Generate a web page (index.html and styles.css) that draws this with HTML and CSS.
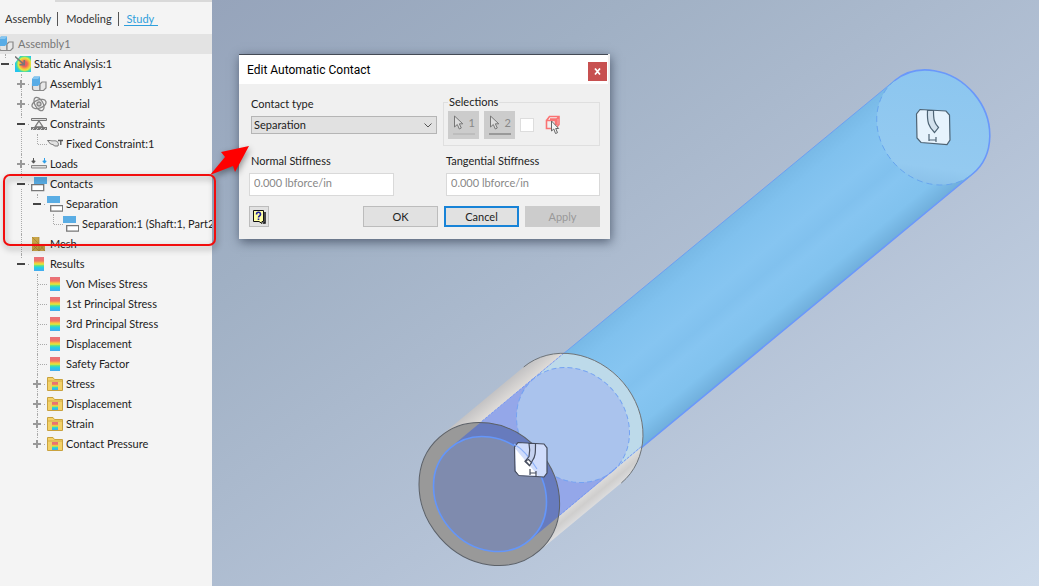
FILE: index.html
```html
<!DOCTYPE html>
<html lang="en">
<head>
  <meta charset="UTF-8" />
  <meta name="viewport" content="width=device-width, initial-scale=1.0" />
  <title>Assembly1 - Static Analysis</title>
  <link rel="stylesheet" href="styles.css">
</head>
<body>
  <!-- shared icons -->
  <svg class="defs" width="0" height="0" aria-hidden="true">
    <defs>
      <linearGradient id="rainbow" x1="0" y1="0" x2="0" y2="1">
        <stop offset="0" stop-color="#e8707c" />
        <stop offset=".28" stop-color="#ee7568" />
        <stop offset=".42" stop-color="#f5c242" />
        <stop offset=".52" stop-color="#dfe83c" />
        <stop offset=".62" stop-color="#5ce08c" />
        <stop offset=".75" stop-color="#22cfe8" />
        <stop offset="1" stop-color="#46a8f0" />
      </linearGradient>
      <radialGradient id="heat" cx=".6" cy=".5" r=".65">
        <stop offset=".25" stop-color="#f0605c" />
        <stop offset=".45" stop-color="#f6b040" />
        <stop offset=".6" stop-color="#e6e83c" />
        <stop offset=".75" stop-color="#4ddc9c" />
        <stop offset=".9" stop-color="#22c4ee" />
      </radialGradient>
      <symbol id="i-assembly" viewBox="0 0 16 16">
        <path d="M4 8h5v6.500H3.500a2 2 0 0 1-2-2V8z" fill="#e4e4e4" stroke="#888" stroke-width="1.200" />
        <path d="M9 8l2-2h4v6l-2.500 2.500H9z" fill="#e8e8e8" stroke="#888" stroke-width="1.200" />
        <path d="M1 3l2-2.500h6V8L7 10H1z" fill="#58ace6" />
        <path d="M1 3l2-2.500h6L7 3z" fill="#86c6f0" />
      </symbol>
      <symbol id="i-static" viewBox="0 0 16 16">
        <path d="M5 0h11v16H0V7z" fill="url(#heat)" />
        <path d="M0 .5l9 8M9.300 4v4.800H4.500" fill="none" stroke="#777" stroke-width="1.600" />
      </symbol>
      <symbol id="i-material" viewBox="0 0 16 16">
        <g fill="none" stroke="#888" stroke-width="1.300">
          <ellipse cx="8" cy="8" rx="7.300" ry="4.200" transform="rotate(-20 8 8)" />
          <ellipse cx="8" cy="8" rx="7.300" ry="4" transform="rotate(60 8 8)" />
          <circle cx="8" cy="8" r="2" fill="#ccc" />
        </g>
      </symbol>
      <symbol id="i-constraints" viewBox="0 0 16 16">
        <path d="M.5 2.500h15v2H.5z" fill="#ddd" stroke="#777" />
        <path d="M8 5l4 6H4z" fill="#eee" stroke="#777" stroke-width="1.300" />
        <path d="M0 11h16v3H0z" fill="#777" />
        <path d="M1 14l2-2M5 14l2-2M9 14l2-2M13 14l2-2" stroke="#ccc" />
      </symbol>
      <symbol id="i-fixed" viewBox="0 0 16 16">
        <path d="M.5 4.500h3c3 1 5-1 7.500 2 .5 1 .5 2 0 3.500H7.500C7 8.500 5 8.500 3.500 8z" fill="#e2e2e2" stroke="#777" />
        <path d="M11 4.500h5M13.800 4.500V9" fill="none" stroke="#555" stroke-width="1.300" />
      </symbol>
      <symbol id="i-loads" viewBox="0 0 16 16">
        <path d="M2.500 2v5M.8 5l1.700 2.200L4.200 5z" stroke="#555" fill="#555" />
        <path d="M13.500 2v5M11.800 5l1.700 2.200L15.200 5z" stroke="#2f9fe8" fill="#2f9fe8" />
        <path d="M.5 9.500h15v2.500H.5z" fill="#ddd" stroke="#888" />
      </symbol>
      <symbol id="i-contact" viewBox="0 0 16 16">
        <path d="M3 1h13v7H3z" fill="#5aade4" />
        <path d="M.7 8.700h12v6H.7z" fill="#fff" stroke="#777" stroke-width="1.300" />
      </symbol>
      <symbol id="i-separation" viewBox="0 0 16 16">
        <path d="M0 0h13v7H0z" fill="#5aade4" />
        <path d="M3.700 9.700h12v5.500h-12z" fill="#fff" stroke="#777" stroke-width="1.300" />
      </symbol>
      <symbol id="i-mesh" viewBox="0 0 16 16">
        <path d="M1 1h7v7h6v7H1z" fill="#c9a548" />
        <path d="M1 1l7 7H1l7 7V8l6 7M1 15l7-7V1M8 15l6-7" fill="none" stroke="#a48130" stroke-width=".7" />
      </symbol>
      <symbol id="i-result" viewBox="0 0 16 16">
        <path d="M3 1h10v14H3z" fill="url(#rainbow)" />
      </symbol>
      <symbol id="i-folder" viewBox="0 0 16 16">
        <path d="M.5 14.500v-13H6l1.500 2h8v11z" fill="#f3d168" stroke="#c9a23e" />
        <path d="M1 5h14" stroke="#d4ad48" />
        <path d="M5 6h6v8H5z" fill="url(#rainbow)" />
      </symbol>
      <symbol id="i-cursor" viewBox="0 0 12 16">
        <path d="M1.500 1v11l2.800-2.500 2 4.500 2-1-2-4.200h3.500z" fill="#ddd" stroke="#777" />
      </symbol>
    </defs>
  </svg>

  <aside class="sidebar">
    <nav class="tabs">
      <a href="#" class="tab">Assembly</a>
      <a href="#" class="tab">Modeling</a>
      <a href="#" class="tab active">Study</a>
    </nav>
    <div class="doc"><svg class="icon"><use href="#i-assembly" /></svg>Assembly1</div>

    <ul class="tree">
      <li>
        <div class="row"><button class="toggle minus" aria-label="Collapse"></button><svg class="icon"><use href="#i-static" /></svg>Static Analysis:1</div>
        <ul>
          <li><div class="row"><button class="toggle plus" aria-label="Expand"></button><svg class="icon"><use href="#i-assembly" /></svg>Assembly1</div></li>
          <li><div class="row"><button class="toggle plus" aria-label="Expand"></button><svg class="icon"><use href="#i-material" /></svg>Material</div></li>
          <li>
            <div class="row"><button class="toggle minus" aria-label="Collapse"></button><svg class="icon"><use href="#i-constraints" /></svg>Constraints</div>
            <ul>
              <li><div class="row leaf"><svg class="icon"><use href="#i-fixed" /></svg>Fixed Constraint:1</div></li>
            </ul>
          </li>
          <li><div class="row"><button class="toggle plus" aria-label="Expand"></button><svg class="icon"><use href="#i-loads" /></svg>Loads</div></li>
          <li>
            <div class="row"><button class="toggle minus" aria-label="Collapse"></button><svg class="icon"><use href="#i-contact" /></svg>Contacts</div>
            <ul>
              <li>
                <div class="row"><button class="toggle minus" aria-label="Collapse"></button><svg class="icon"><use href="#i-separation" /></svg>Separation</div>
                <ul>
                  <li><div class="row leaf"><svg class="icon"><use href="#i-separation" /></svg>Separation:1 (Shaft:1, Part2</div></li>
                </ul>
              </li>
            </ul>
          </li>
          <li><div class="row leaf"><svg class="icon"><use href="#i-mesh" /></svg>Mesh</div></li>
          <li>
            <div class="row"><button class="toggle minus" aria-label="Collapse"></button><svg class="icon"><use href="#i-result" /></svg>Results</div>
            <ul>
              <li><div class="row leaf"><svg class="icon"><use href="#i-result" /></svg>Von Mises Stress</div></li>
              <li><div class="row leaf"><svg class="icon"><use href="#i-result" /></svg>1st Principal Stress</div></li>
              <li><div class="row leaf"><svg class="icon"><use href="#i-result" /></svg>3rd Principal Stress</div></li>
              <li><div class="row leaf"><svg class="icon"><use href="#i-result" /></svg>Displacement</div></li>
              <li><div class="row leaf"><svg class="icon"><use href="#i-result" /></svg>Safety Factor</div></li>
              <li><div class="row"><button class="toggle plus" aria-label="Expand"></button><svg class="icon"><use href="#i-folder" /></svg>Stress</div></li>
              <li><div class="row"><button class="toggle plus" aria-label="Expand"></button><svg class="icon"><use href="#i-folder" /></svg>Displacement</div></li>
              <li><div class="row"><button class="toggle plus" aria-label="Expand"></button><svg class="icon"><use href="#i-folder" /></svg>Strain</div></li>
              <li><div class="row"><button class="toggle plus" aria-label="Expand"></button><svg class="icon"><use href="#i-folder" /></svg>Contact Pressure</div></li>
            </ul>
          </li>
        </ul>
      </li>
    </ul>
  </aside>

  <main class="viewport">
    <svg class="model" viewBox="212 0 827 586" preserveAspectRatio="xMinYMin slice">
      <defs>
        <linearGradient id="shaft" gradientUnits="userSpaceOnUse" x1="714" y1="229" x2="792" y2="323">
          <stop offset="0" stop-color="#78b9e6" />
          <stop offset=".15" stop-color="#80c1ee" />
          <stop offset=".4" stop-color="#86c5f1" />
          <stop offset=".55" stop-color="#81c1ee" />
          <stop offset=".65" stop-color="#86c5f1" />
          <stop offset=".85" stop-color="#81c2ee" />
          <stop offset="1" stop-color="#70afdc" />
        </linearGradient>
        <linearGradient id="cap" x1="0" y1="0" x2="1" y2="1">
          <stop offset="0" stop-color="#8ac5ef" />
          <stop offset=".75" stop-color="#94caf0" />
          <stop offset="1" stop-color="#7fb6e0" />
        </linearGradient>
        <linearGradient id="collar" gradientUnits="userSpaceOnUse" x1="483" y1="401" x2="579" y2="518">
          <stop offset="0" stop-color="#c4c3c4" />
          <stop offset=".09" stop-color="#dddad7" />
          <stop offset=".9" stop-color="#dddcdb" />
          <stop offset=".95" stop-color="#cfcecd" />
          <stop offset="1" stop-color="#dcdcdd" />
        </linearGradient>
        <clipPath id="farEnd"><ellipse cx="572.500" cy="425" rx="75.600" ry="65.900" transform="rotate(48.600 572.500 425)" /></clipPath>
        <clipPath id="nearEnd"><ellipse cx="489.300" cy="494" rx="75.600" ry="65.900" transform="rotate(48.600 489.300 494)" /></clipPath>
      </defs>

      <!-- shaft -->
      <path d="M534 378L894 81L972 174L612 472z" fill="url(#shaft)" />
      <ellipse cx="933.300" cy="127.300" rx="60.800" ry="52.900" transform="rotate(48.600 933.300 127.300)" fill="url(#cap)" />
      <path d="M534 378L894 81" stroke="#6c9ff2" fill="none" />
      <path d="M612 472L972.500 174A60.800 52.900 48.600 0 0 894 81" stroke="#6a98fa" stroke-width="1.600" fill="none" />
      <path d="M894 81A60.800 52.900 48.600 0 0 972.500 174" stroke="#68a5ee" stroke-dasharray="6 4" fill="none" />

      <!-- collar -->
      <path d="M440.500 436L523.700 367A75.600 65.900 48.600 0 1 621.300 483L538 552z" fill="url(#collar)" />
      <g clip-path="url(#farEnd)">
        <path d="M534 378L894 81L972 174L612 472z" fill="#bddaea" />
      </g>
      <path d="M451 447L534 378L612 472L529 541z" fill="#94a7e9" />
      <ellipse cx="573" cy="425" rx="60.800" ry="52.900" transform="rotate(48.600 573 425)" fill="#aac3ed" stroke="#75a3f2" stroke-dasharray="5 3" />
      <path d="M451 447L564 353M529 541L642 446" stroke="#7798f4" stroke-dasharray="3 1" fill="none" />
      <path d="M523.700 367A75.600 65.900 48.600 0 1 621.300 483" stroke="#6d7378" fill="none" />

      <!-- front face -->
      <ellipse cx="489.300" cy="494" rx="75.600" ry="65.900" transform="rotate(48.600 489.300 494)" fill="#999" />
      <g clip-path="url(#nearEnd)">
        <path d="M451 447L534 378L612 472L529 541z" fill="#677bbd" />
      </g>
      <ellipse cx="489.300" cy="494" rx="75.600" ry="65.900" transform="rotate(48.600 489.300 494)" fill="none" stroke="#5c6168" />
      <ellipse cx="490" cy="494" rx="60.800" ry="52.900" transform="rotate(48.600 490 494)" fill="#7f8bae" stroke="#6496fa" stroke-width="1.600" />

      <!-- contact glyphs -->
      <g transform="translate(916 109)" stroke="#4d6374" stroke-width="1.200" fill="#e6f3fd">
        <path d="M4 .5L30 2l3.500 4L34 31l-3 4.500L5 33.500 1 29 .5 5z" />
        <path d="M11.500 1.500h6c0 9 .5 12 5 17l-4 5c-6-6-7.500-10-7-22z" fill="#d3e2ee" />
        <path d="M13 25v7M20 28v5M13 31h7" fill="none" />
      </g>
      <g transform="translate(514 442)" stroke="#454b5c" stroke-width="1.200">
        <path d="M4 .5L30 2l3 4V31l-3 4L5 33.500 1 29 .5 5z" fill="#d0dcfb" />
        <path d="M1.500 7L24 33.500 5 33 2 29z" fill="#fff" stroke="none" />
        <path d="M0 2Q12 9 23 27" stroke="#8db1f8" fill="none" />
        <path d="M15 1.500h6.500c0 9 0 13-3 17l-3 5-4.500-4 4-5c1-4 1-8 0-13z" fill="#c5d1ef" />
        <path d="M11.500 19l3-1.500 3 3-2 3z" fill="#fff" />
        <path d="M16 27v6M22 29v5M16 31h6" fill="none" />
      </g>
    </svg>

    <form class="dialog">
      <header class="dialog-title">
        <span>Edit Automatic Contact</span>
        <button type="button" class="close" aria-label="Close">
          <svg width="7" height="7" viewBox="0 0 7 7"><path d="M1 .5l5 6M6 .5l-5 6" stroke="#fff" stroke-width="1.700" /></svg>
        </button>
      </header>
      <div class="dialog-body">
        <div class="fields">
          <div class="field type">
            <label for="contactType">Contact type</label>
            <div class="select">
              <select id="contactType"><option>Separation</option></select>
              <svg width="8" height="5" viewBox="0 0 8 5"><path d="M.5 .5L4 4 7.500 .5" fill="none" stroke="#555" /></svg>
            </div>
          </div>
          <fieldset>
            <legend>Selections</legend>
            <div class="picks">
              <button type="button" class="pick" disabled><svg width="12" height="16"><use href="#i-cursor" /></svg>1</button>
              <button type="button" class="pick second" disabled><svg width="12" height="16"><use href="#i-cursor" /></svg>2</button>
              <input type="checkbox" aria-label="Select part first" disabled>
              <svg class="part" width="16" height="20" viewBox="0 0 16 20">
                <path d="M1.500 5.500h9v8h-9zM1.500 5.500l3-4h9.500v8l-3.500 4M10.500 5.500l3.500-4M5 4h7v6" fill="none" stroke="#fa7373" stroke-width="1.600" />
                <path d="M6.500 6v10l2.300-2 1.700 4.500 2-.8-1.800-4.200h3z" fill="#f4f4f4" stroke="#666" />
              </svg>
            </div>
          </fieldset>
          <div class="field">
            <label for="normal">Normal Stiffness</label>
            <input type="text" class="short" id="normal" value="0.000 lbforce/in" disabled>
          </div>
          <div class="field tangential">
            <label for="tangential">Tangential Stiffness</label>
            <input type="text" id="tangential" value="0.000 lbforce/in" disabled>
          </div>
        </div>
        <div class="actions">
          <button type="button" class="help" aria-label="Help">
            <svg width="14" height="16" viewBox="0 0 14 16">
              <path d="M1.500 1.500h10v11H10v2l-3-2H1.500z" fill="#ffffa6" stroke="#111" />
              <path d="M13 3v11h-2" fill="none" stroke="#111" stroke-width="1.500" />
              <path d="M4.500 5.500c0-3 4-3 4 0 0 1.300-2 1.300-2 3M6.500 9.500v1.500" fill="none" stroke="#1c1c9c" stroke-width="1.600" />
            </svg>
          </button>
          <button type="button" class="btn">OK</button>
          <button type="button" class="btn focus">Cancel</button>
          <button type="button" class="btn" disabled>Apply</button>
        </div>
      </div>
    </form>
  </main>

  <!-- red callout over the Contacts branch -->
  <svg class="callout" width="260" height="120" viewBox="0 0 260 120">
    <rect x="4" y="35" width="211" height="70" rx="6" fill="none" stroke="#f20d0d" stroke-width="2" />
    <path d="M249 6L221 12l4 5-15 18 23-9 2 6z" fill="#ff0000" />
  </svg>
</body>
</html>
```

FILE: styles.css
```css
* {
  margin: 0;
  padding: 0;
  box-sizing: border-box;
}

body {
  display: flex;
  min-height: 100vh;
  position: relative;
  overflow: hidden;
  font-family: Lato, "Noto Sans", sans-serif;
  font-size: 11px;
  line-height: 20px;
  color: #222;
}

button, input, select {
  font: inherit;
  color: inherit;
}

.defs {
  position: absolute;
}

/* SIDEBAR */
.sidebar {
  flex: 0 0 212px;
  overflow: hidden;
  background: linear-gradient(#d9d9d9, #d9d9d9) 55px 0 / 100% 2px no-repeat #f4f4f4;
  white-space: nowrap;
}

.tabs {
  display: flex;
  align-items: center;
  height: 34px;
  padding: 3px 0 0 5px;
}

.tab {
  line-height: 14px;
  color: #333;
  text-decoration: none;
}

.tab + .tab {
  margin-left: 6px;
  padding-left: 8px;
  border-left: 1px solid #555;
}

.tab.active {
  padding-right: 4px;
  color: #2f9fdc;
  background: linear-gradient(#2f9fdc, #2f9fdc) right bottom / calc(100% - 5px) 1px no-repeat;
}

.doc {
  display: flex;
  align-items: center;
  gap: 1px;
  height: 20px;
  margin-left: -2px;
  background: #e3e3e3;
  color: #777;
}

.tree, .tree ul {
  list-style: none;
}

.tree ul {
  margin-left: 16px;
}

.tree li {
  position: relative;
}

/* dotted guide line of each branch */
.tree li::before {
  content: "";
  position: absolute;
  left: 5px;
  top: 0;
  bottom: 0;
  border-left: 1px dotted #aaa;
}

.tree li:last-child::before {
  bottom: auto;
  height: 10px;
}

.row {
  display: flex;
  align-items: center;
  height: 20px;
  background: linear-gradient(90deg, #aaa 1px, transparent 1px) 12px 10px / 2px 1px no-repeat;
}

.row.leaf {
  padding-left: 15px;
  background: repeating-linear-gradient(90deg, #aaa 0 1px, transparent 1px 2px) 6px 10px / 9px 1px no-repeat;
}

.icon {
  flex: none;
  width: 16px;
  height: 16px;
  margin-right: 3px;
}

.toggle {
  position: relative;
  width: 10px;
  height: 10px;
  margin-right: 5px;
  border: 0;
}

.minus {
  background: linear-gradient(#444, #444) center / 8px 2px no-repeat #f4f4f4;
}

.plus {
  background:
    linear-gradient(#999, #999) center / 8px 2px no-repeat,
    linear-gradient(#999, #999) center / 2px 8px no-repeat,
    #f4f4f4;
}

/* 3D VIEW */
.viewport {
  flex: 1;
  position: relative;
  background: linear-gradient(145deg, #96a4bb 0%, #a0b0c4 25%, #b4c2d6 60%, #cddaea 100%);
}

.model {
  display: block;
  width: 100%;
  height: 100vh;
}

/* DIALOG */
.dialog {
  position: absolute;
  left: 27px;
  top: 54px;
  width: 371px;
  background: #f0f0f0;
  box-shadow: 1px 3px 10px rgba(30, 40, 60, 0.6);
  line-height: 16px;
}

.dialog-title {
  display: flex;
  align-items: center;
  justify-content: space-between;
  height: 30px;
  margin-right: 2px;
  padding: 0 1px 0 8px;
  border-top: 1px solid #444a55;
  background: #fff;
  font-family: Roboto, "Noto Sans", sans-serif;
  font-size: 12px;
  color: #000;
}

.close {
  width: 19px;
  height: 19px;
  margin-top: 3px;
  border: 0;
  background: #c75050;
  line-height: 0;
}

.dialog-body {
  padding: 12px 10px;
}

.fields {
  display: grid;
  grid-template-columns: 188px 1fr;
  column-gap: 6px;
  row-gap: 7px;
}

.field {
  display: flex;
  flex-direction: column;
  gap: 4px;
}

.field label {
  padding-left: 2px;
}

.field.tangential {
  padding-left: 3px;
}

.field.tangential label {
  padding-left: 0;
}

.select {
  display: flex;
  align-items: center;
  margin-left: 2px;
}

.select select {
  flex: 1;
  height: 18px;
  padding-left: 2px;
  border: 1px solid #b5b5b5;
  border-radius: 0;
  background: #e1e1e1;
  appearance: none;
}

.select svg {
  margin-left: -13px;
  margin-right: 5px;
  pointer-events: none;
}

fieldset {
  height: 50px;
  border: 1px solid #dfdfdf;
  padding: 0 4px;
}

fieldset legend {
  line-height: 12px;
  padding: 0 1px;
}

.picks {
  display: flex;
  align-items: center;
  gap: 5px;
  padding-top: 3px;
}

.pick {
  display: flex;
  align-items: center;
  justify-content: space-between;
  width: 31px;
  height: 28px;
  padding: 0 4px 4px 5px;
  border: 0;
  background: linear-gradient(#bdbdbd, #bdbdbd) center 22px / 22px 2px no-repeat #ccc;
  color: #888;
}

.pick.second {
  background-image: linear-gradient(#999, #999);
}

.picks input {
  width: 14px;
  height: 14px;
  border: 1px solid #ddd;
  background: #fff;
  appearance: none;
}

.part {
  margin-left: 6px;
}

input[type="text"] {
  height: 23px;
  width: 100%;
  padding: 0 4px 4px;
  border: 1px solid #d9d9d9;
  background: #fff;
  color: #888;
}

input.short {
  width: 145px;
}

.actions {
  display: flex;
  gap: 6px;
  margin-top: 10px;
}

.btn {
  width: 75px;
  height: 21px;
  border: 1px solid #bcbcbc;
  background: #e1e1e1;
}

.btn:disabled {
  border-color: #ccc;
  background: #ccc;
  color: #999;
}

.btn.focus {
  border: 2px solid #1883d7;
}

.help {
  width: 20px;
  height: 21px;
  margin-right: auto;
  border: 1px solid #bcbcbc;
  background: #e1e1e1;
  line-height: 0;
}

/* CALLOUT */
.callout {
  position: absolute;
  left: 0;
  top: 140px;
  pointer-events: none;
  filter: drop-shadow(1px 3px 3px rgba(0, 0, 0, 0.4));
}
```
